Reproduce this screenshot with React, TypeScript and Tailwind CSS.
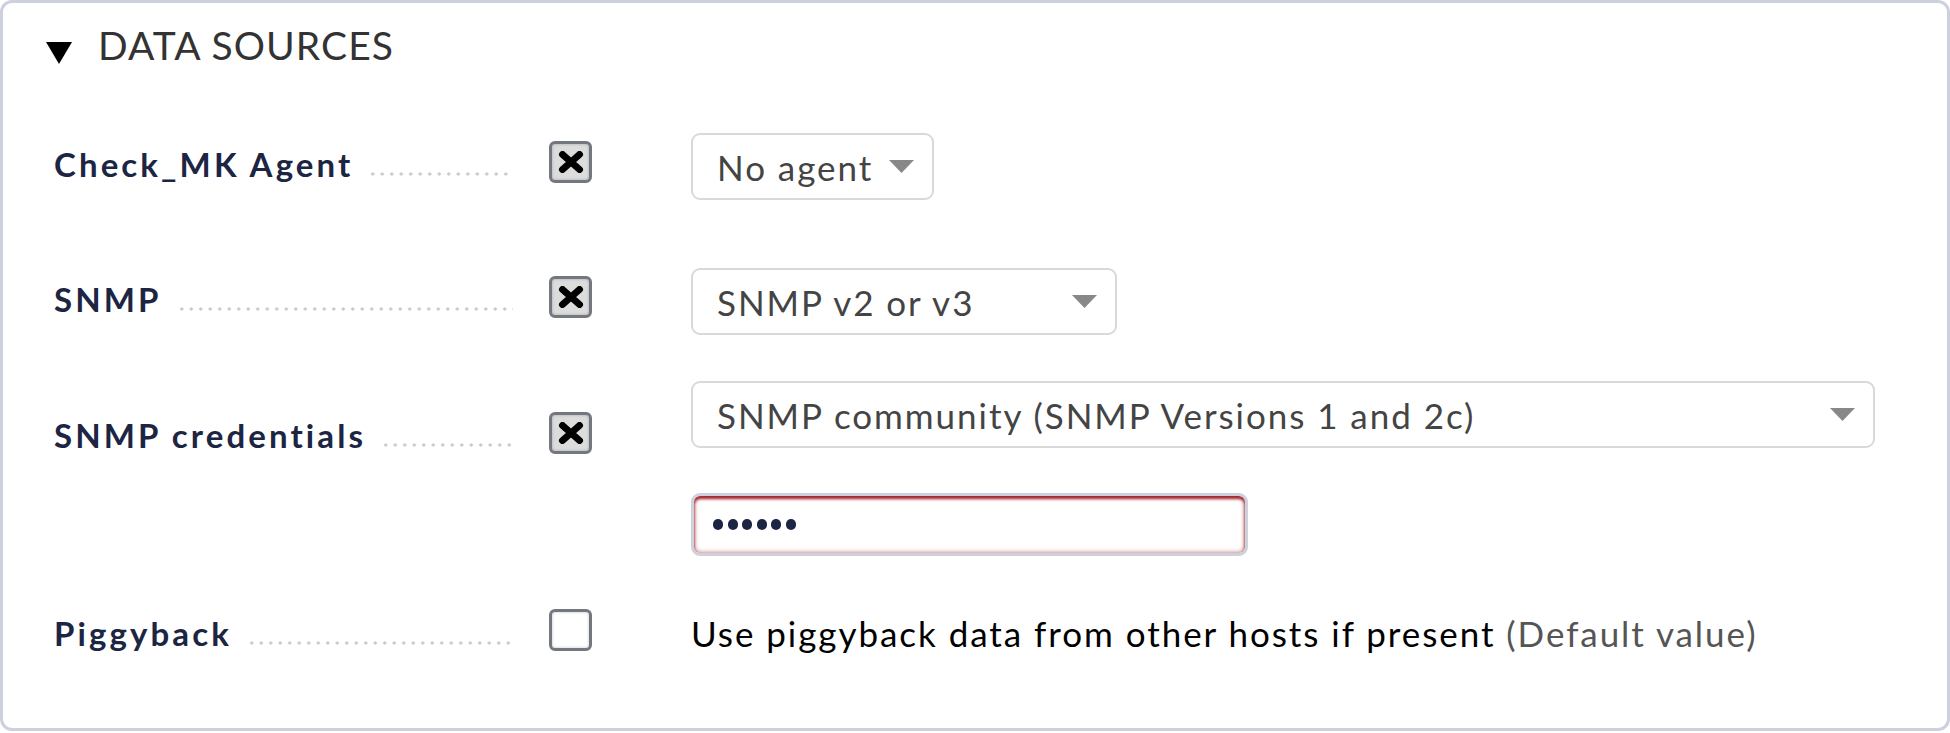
import React from "react";

const dots =
  "flex-1 h-[40px] ml-[15px] bg-[radial-gradient(circle,#cacaca_1.4px,transparent_1.8px)] bg-[length:9.5px_6px] bg-repeat-x bg-[position:0_27px]";

function Label({ text }: { text: string }) {
  return (
    <div className="flex w-[459px] items-start">
      <span className="text-[33px] leading-[40px] font-bold tracking-[3.1px] text-[#1c2542] whitespace-nowrap">
        {text}
      </span>
      <div className={dots} />
    </div>
  );
}

function Check({ checked }: { checked: boolean }) {
  return (
    <div
      className={
        "w-[43px] h-[42px] rounded-[6px] border-[3px] border-[#73777f] flex items-center justify-center shadow-[inset_0_0_3px_rgba(0,0,0,0.25)] " +
        (checked ? "bg-[#dcdcdc]" : "bg-white")
      }
    >
      {checked && (
        <svg width="26" height="22" viewBox="0 0 26 22">
          <path d="M4.5 3.5 L21.5 18.5 M21.5 3.5 L4.5 18.5" stroke="#000" strokeWidth="7" strokeLinecap="round" />
        </svg>
      )}
    </div>
  );
}

function Arrow() {
  return (
    <svg width="25" height="13" viewBox="0 0 25 13" className="shrink-0">
      <polygon points="0,0 25,0 12.5,13" fill="#888888" />
    </svg>
  );
}

function Select({ text, w }: { text: string; w: string }) {
  return (
    <div
      className={
        "h-[67px] border-2 border-[#d9d9d9] rounded-[9px] bg-white flex items-center justify-between pl-[24px] pr-[18px] " +
        w
      }
    >
      <span className="text-[35px] leading-[40px] tracking-[1.95px] text-[#444444] whitespace-nowrap">{text}</span>
      <Arrow />
    </div>
  );
}

export default function App() {
  return (
    <div className="w-[1950px] h-[733px] bg-white font-['Lato','Liberation_Sans',sans-serif]">
      <div className="w-[1950px] h-[731px] border-[3px] border-[#cdd0dd] rounded-[12px]">
        <div className="flex items-start pl-[43px] pt-[19px]">
          <svg width="26" height="22" viewBox="0 0 26 22" className="mt-[20px] shrink-0">
            <polygon points="0,0 26,0 13,22" fill="#000" />
          </svg>
          <span className="ml-[26px] text-[39px] leading-[47px] tracking-[1.1px] text-[#333333]">
            DATA SOURCES
          </span>
        </div>

        <div className="pl-[51px]">
          <div className="flex items-start mt-[64px]">
            <div className="mt-[11px]">
              <Label text="Check_MK Agent" />
            </div>
            <div className="ml-[36px] mt-[8px]">
              <Check checked />
            </div>
            <div className="ml-[99px]">
              <Select text="No agent" w="w-[243px]" />
            </div>
          </div>

          <div className="flex items-start mt-[68px]">
            <div className="mt-[11px]">
              <Label text="SNMP" />
            </div>
            <div className="ml-[36px] mt-[8px]">
              <Check checked />
            </div>
            <div className="ml-[99px]">
              <Select text="SNMP v2 or v3" w="w-[426px]" />
            </div>
          </div>

          <div className="flex items-start mt-[46px]">
            <div className="mt-[34px]">
              <Label text="SNMP credentials" />
            </div>
            <div className="ml-[36px] mt-[31px]">
              <Check checked />
            </div>
            <div className="ml-[99px] flex flex-col">
              <Select text="SNMP community (SNMP Versions 1 and 2c)" w="w-[1184px]" />
              <div className="mt-[45px] w-[557px] h-[63px] rounded-[9px] border-[3px] border-[#cdd0dd] bg-white shadow-[inset_0_3px_3px_#a3262d,inset_0_0_5px_#c0575c] flex items-center gap-[4.5px] pl-[19px]">
                <span className="w-[10px] h-[11px] rounded-full bg-[#1c2542]" />
                <span className="w-[10px] h-[11px] rounded-full bg-[#1c2542]" />
                <span className="w-[10px] h-[11px] rounded-full bg-[#1c2542]" />
                <span className="w-[10px] h-[11px] rounded-full bg-[#1c2542]" />
                <span className="w-[10px] h-[11px] rounded-full bg-[#1c2542]" />
                <span className="w-[10px] h-[11px] rounded-full bg-[#1c2542]" />
              </div>
            </div>
          </div>

          <div className="flex items-start mt-[53px]">
            <div className="mt-[4px]">
              <Label text="Piggyback" />
            </div>
            <div className="ml-[36px]">
              <Check checked={false} />
            </div>
            <div className="ml-[99px] mt-[4px] text-[35px] leading-[40px] tracking-[1.95px] whitespace-nowrap">
              <span className="text-black">Use piggyback data from other hosts if present</span>
              <span className="text-[#555555]"> (Default value)</span>
            </div>
          </div>
        </div>
      </div>
    </div>
  );
}
